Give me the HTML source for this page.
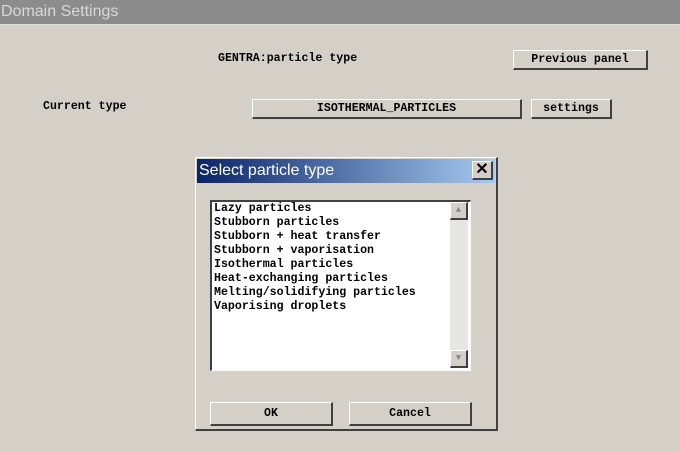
<!DOCTYPE html>
<html><head><style>
body{margin:0;width:680px;height:452px;background:#d4d0c8;position:relative;overflow:hidden;font-family:"Liberation Mono",monospace;font-weight:bold;font-size:11.6px;color:#000}
.a{position:absolute}
.tb{left:0;top:0;width:680px;height:24px;background:#8c8c8c;border-bottom:1px solid #ddd}
.tb span{position:absolute;left:1px;top:3px;font-family:"Liberation Sans",sans-serif;font-weight:normal;font-size:16px;color:#d8d8d8}
.btn{position:absolute;background:#d4d0c8;border-top:1px solid #fff;border-left:1px solid #fff;border-right:2px solid #404040;border-bottom:2px solid #404040;box-sizing:border-box;text-align:center}
</style></head><body>
<div class="a tb"><span>Domain Settings</span></div>
<div class="a" style="left:218px;top:52px">GENTRA:particle type</div>
<div class="btn" style="left:513px;top:50px;width:135px;height:20px;line-height:17px">Previous panel</div>
<div class="a" style="left:43px;top:100px">Current type</div>
<div class="btn" style="left:252px;top:99px;width:270px;height:20px;line-height:17px">ISOTHERMAL_PARTICLES</div>
<div class="btn" style="left:531px;top:99px;width:81px;height:20px;line-height:17px">settings</div>

<div class="a" style="left:195px;top:157px;width:303px;height:274px;background:#d4d0c8;border-top:1px solid #fff;border-left:1px solid #fff;border-right:2px solid #404040;border-bottom:2px solid #404040;box-sizing:border-box"></div>
<div class="a" style="left:197px;top:159px;width:298px;height:24px;background:linear-gradient(90deg,#0a246a,#a6caf0)"></div>
<div class="a" style="left:199px;top:162px;font-family:'Liberation Sans',sans-serif;font-weight:normal;font-size:16px;color:#fff">Select particle type</div>
<div class="btn" style="left:472px;top:161px;width:21px;height:19px;line-height:16px;font-family:'Liberation Sans',sans-serif;font-size:16px">✕</div>

<div class="a" style="left:210px;top:200px;width:261px;height:171px;background:#fff;border-top:2px solid #404040;border-left:2px solid #404040;border-right:1px solid #fff;border-bottom:1px solid #fff;box-sizing:border-box"></div>
<div class="a" style="left:450px;top:202px;width:18px;height:166px;background:#e8e6e2"></div>
<div class="btn" style="left:450px;top:202px;width:18px;height:18px;font-size:9px;color:#888;line-height:15px">▲</div>
<div class="btn" style="left:450px;top:350px;width:18px;height:18px;font-size:9px;color:#888;line-height:15px">▼</div>
<div class="a" style="left:214px;top:202px;line-height:14px;white-space:pre">Lazy particles
Stubborn particles
Stubborn + heat transfer
Stubborn + vaporisation
Isothermal particles
Heat-exchanging particles
Melting/solidifying particles
Vaporising droplets</div>

<div class="btn" style="left:210px;top:402px;width:123px;height:24px;line-height:21px">OK</div>
<div class="btn" style="left:349px;top:402px;width:123px;height:24px;line-height:21px">Cancel</div>
</body></html>
